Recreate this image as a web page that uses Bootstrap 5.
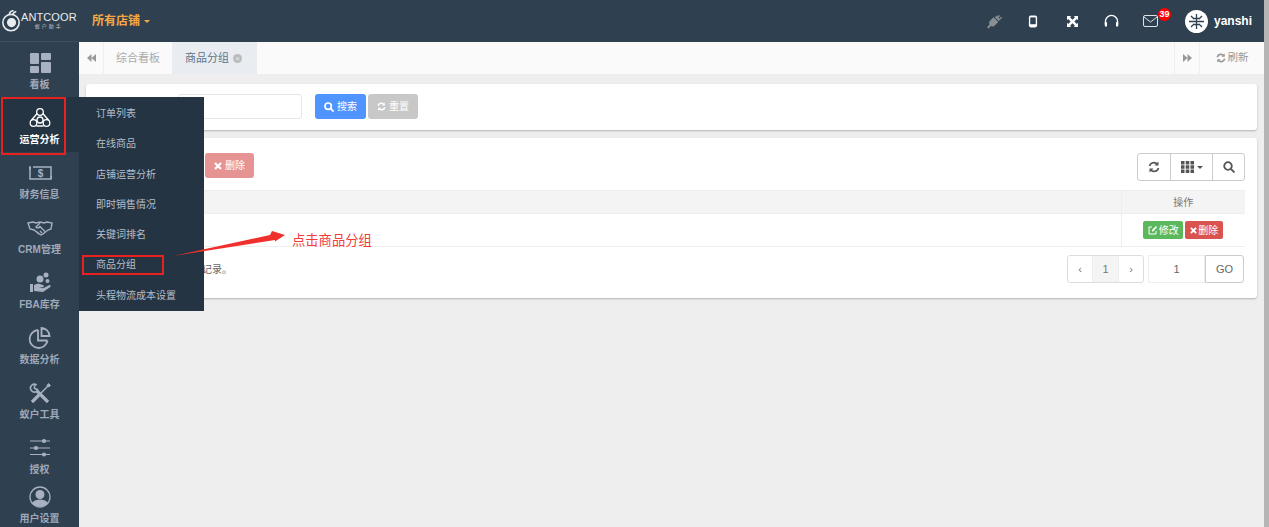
<!DOCTYPE html>
<html lang="zh-CN">
<head>
    <meta charset="UTF-8">
    <title>商品分组</title>
    <link href="https://cdn.jsdelivr.net/npm/bootstrap@5.3.0/dist/css/bootstrap.min.css" rel="stylesheet">
    <style>
        html, body { height: 100%; overflow: hidden; }
        body { font-family: "Liberation Sans", "Noto Sans CJK SC", sans-serif; font-size: 10px; color: #666; background: #eee; position: relative; }

        /* top bar */
        .top-bar { height: 42px; background: #2f4050; margin-right: 5px; }
        .logo-box { width: 79px; color: #e8ecef; padding-left: 1px; }
        .logo-name { font-size: 11px; line-height: 11px; letter-spacing: .1px; }
        .logo-sub { font-size: 5px; line-height: 7px; letter-spacing: 2px; text-align: center; color: #c5ccd2; }
        .shop-pick { color: #f4a742; font-size: 12px; font-weight: 700; margin-left: 13px; }
        .caret-down { display: inline-block; border-top: 3px solid currentColor; border-left: 3px solid transparent; border-right: 3px solid transparent; vertical-align: middle; }
        .top-icons { color: #fff; }
        .top-icon { width: 39px; display: flex; justify-content: center; position: relative; }
        .msg-count { position: absolute; top: -7px; left: 27px; background: #f00; color: #fff; font-size: 9px; font-weight: 700; line-height: 13px; width: 13px; height: 13px; text-align: center; border-radius: 50%; }
        .user-name { color: #fff; font-size: 12px; font-weight: 700; margin: 0 12px 0 6px; }
        .user-pic { width: 23px; height: 23px; border-radius: 50%; background: #fff; margin-left: 15px; }

        /* side menu */
        .main-wrap { height: 485px; }
        .side-bar { width: 79px; flex: none; background: #2f4050; border-top: 1px solid #3d4e5e; margin-top: -1px; }
        .side-item { height: 55px; color: #9ea9ba; display: flex; flex-direction: column; align-items: center; padding-top: 9px; font-weight: 700; font-size: 10px; line-height: 14px; text-decoration: none; }
        .side-item svg { height: 24px; width: 26px; margin-bottom: 3px; }
        .side-item.current { background: #243443; color: #fff; }
        .side-item.last-one { padding-top: 3px; }

        /* fly-out menu */
        .fly-menu { position: absolute; left: 79px; top: 97px; width: 125px; height: 214px; background: #243443; padding-top: 2px; z-index: 5; }
        .fly-menu a { display: block; height: 30.3px; line-height: 30px; padding-left: 17px; color: #b6bec8; font-size: 10px; text-decoration: none; }

        /* tabs */
        .page-area { min-width: 0; margin-right: 5px; }
        .tab-bar { height: 33px; background: #fafafa; border-bottom: 1px solid #eee; font-size: 11px; color: #aaa; }
        .tab-arrow { width: 25px; flex: none; color: #999; border-right: 1px solid #eee; justify-content: center; }
        .tab-link { padding: 0 12px; height: 100%; display: flex; align-items: center; gap: 4px; }
        .tab-link.now { background: #e9edf2; color: #5f7488; padding: 0 15px 0 13px; }
        .tab-close { width: 9px; height: 9px; border-radius: 50%; background: #bbb; color: #e9edf2; font-size: 8px; line-height: 9px; text-align: center; }
        .tab-end { border-left: 1px solid #eee; height: 100%; width: 25px; }
        .tab-refresh { width: 65px; justify-content: center; gap: 2px; font-size: 10.5px; color: #999; border-left: 1px solid #eee; height: 100%; }

        /* panels */
        .sheet { background: #fff; margin: 0 7px 8px 7px; border-radius: 3px; box-shadow: 0 1px 2px rgba(0,0,0,.25); }
        .search-sheet { height: 46px; margin-top: 9px; padding: 10px 0 0 92px; }
        .txt-box { width: 124px; height: 25px; border: 1px solid #e5e6e7; border-radius: 3px; margin-right: 13px; background: #fff; }
        .act-btn { height: 25px; width: 51px; border: 0; border-radius: 3px; color: #fff; font-size: 10px; padding: 0; display: inline-flex; align-items: center; justify-content: center; gap: 3px; }
        .act-blue { background: #4f94ff; margin-right: 2px; }
        .act-grey { background: #c8c8c8; width: 50px; }
        .act-red { background: #e69393; width: 49px; }
        .list-sheet { height: 160px; padding: 15px 12px 0 0; }
        .tool-row { height: 37px; padding-left: 119px; }
        .tool-group { display: flex; height: 28px; border: 1px solid #ccc; border-radius: 3px; color: #555; }
        .tool-group span { display: flex; align-items: center; justify-content: center; gap: 3px; border-left: 1px solid #ccc; }
        .tool-group span:first-child { border-left: 0; }
        .data-grid { margin: 0; }
        .data-grid th, .data-grid td { padding: 0; border-color: #eee; font-weight: 400; text-align: center; color: #777; font-size: 10px; }
        .data-grid th { background: #f4f4f4; height: 23px; vertical-align: middle; border-top: 1px solid #eee; border-bottom: 1px solid #eee; }
        .data-grid td { height: 33px; vertical-align: middle; background: #fff; border-bottom: 1px solid #eee; }
        .col-ops { width: 124px; border-left: 1px solid #eee; }
        .row-btn { display: inline-flex; align-items: center; justify-content: center; gap: 1px; height: 18px; border-radius: 2px; color: #fff; font-size: 10px; width: 40px; vertical-align: middle; }
        .row-edit { background: #5cb85c; margin-right: 2px; }
        .row-del { background: #d9534f; width: 38px; }
        .foot-row { height: 28px; margin-top: 8px; padding-left: 75px; }
        .foot-note { font-size: 10px; color: #666; }
        .page-box { display: flex; height: 28px; border: 1px solid #ddd; border-radius: 3px; color: #777; font-size: 11px; margin-right: 4px; }
        .page-box span { display: flex; align-items: center; justify-content: center; }
        .page-box .on { background: #f4f4f4; border-left: 1px solid #eee; border-right: 1px solid #eee; width: 27px; }
        .page-side { width: 24px; }
        .go-box { display: flex; height: 28px; width: 96px; color: #666; font-size: 11px; margin-right: 1px; }
        .go-num { width: 57px; border: 1px solid #eee; display: flex; align-items: center; justify-content: center; }
        .go-btn { flex: 1; border: 1px solid #ccc; border-radius: 0 3px 3px 0; display: flex; align-items: center; justify-content: center; }

        /* annotations drawn on the screenshot */
        .mark-box { position: absolute; border: 2px solid #e8231f; z-index: 6; }
        .mark-side { left: 1px; top: 97px; width: 65px; height: 58px; }
        .mark-item { left: 82px; top: 255px; width: 82px; height: 20px; }
        .mark-arrow { position: absolute; left: 165px; top: 225px; z-index: 6; }
        .mark-text { position: absolute; left: 292px; top: 232px; color: #f23c38; font-size: 13.3px; line-height: 17px; z-index: 6; }
        .edge-strip { position: absolute; right: 0; top: 0; width: 5px; height: 100%; background: #b5b5b5; z-index: 7; }
    </style>
</head>
<body>
    <!-- Top bar -->
    <div class="top-bar d-flex align-items-center">
        <div class="logo-box d-flex align-items-center">
            <svg width="20" height="22" viewBox="0 0 19 21" fill="none" stroke="#e8ecef" stroke-width="1.500"><circle cx="9.500" cy="12" r="7.800"/><circle cx="10" cy="12" r="3.600" fill="#e8ecef"/><path d="M8 4c0-2 1.500-3 4-3.500M11 4.500c.5-1.500 1.500-2.500 3.500-3"/></svg>
            <div>
                <div class="logo-name">ANTCOOR</div>
                <div class="logo-sub">蚁户助手</div>
            </div>
        </div>
        <div class="shop-pick">所有店铺<span class="caret-down ms-1"></span></div>
        <div class="top-icons d-flex align-items-center ms-auto">
            <span class="top-icon"><svg width="15" height="15" viewBox="0 0 16 16" fill="#8a8f94"><path d="M11 1l-2.500 2.500 4 4L15 5l1-1-1-1-2 2-1-1 2-2-1-1-2 2zM7 3.500L3.500 7c-1.500 1.500-1.500 3-.8 4.300L0 14l1.500 1.500 2.700-2.700c1.300.7 2.800.7 4.300-.8L12 8.500z"/></svg></span>
            <span class="top-icon"><svg width="10" height="13" viewBox="0 0 11 14"><rect x="1" y=".5" width="9" height="13" rx="2" fill="#fff"/><rect x="2.500" y="2.500" width="6" height="7.500" fill="#2f4050"/></svg></span>
            <span class="top-icon"><svg width="11" height="11" viewBox="0 0 13 13" fill="#fff"><path d="M0 0h5L3.600 1.400 6.500 4.300 9.400 1.400 8 0h5v5l-1.400-1.400-2.900 2.900 2.900 2.900L13 8v5H8l1.400-1.400-2.900-2.900-2.900 2.900L5 13H0V8l1.400 1.400 2.900-2.900-2.900-2.900L0 5z"/></svg></span>
            <span class="top-icon"><svg width="15" height="14" viewBox="0 0 16 15" fill="none" stroke="#fff" stroke-width="1.400"><path d="M1.500 11V8a6.500 6.500 0 0 1 13 0v3"/><rect x=".8" y="8.500" width="2.400" height="5" rx="1" fill="#fff" stroke="none"/><rect x="12.800" y="8.500" width="2.400" height="5" rx="1" fill="#fff" stroke="none"/></svg></span>
            <span class="top-icon"><svg width="15" height="12" viewBox="0 0 15 12" fill="none" stroke="#dfe3e6" stroke-width="1"><rect x=".5" y=".5" width="14" height="11" rx="1.500"/><path d="M1 2l6.500 5L14 2"/></svg><span class="msg-count">39</span></span>
            <span class="user-pic d-flex align-items-center justify-content-center"><svg width="17" height="17" viewBox="0 0 17 17" stroke="#2f4050" stroke-width="1.300" fill="none"><path d="M8.500 1v15M3 3l3 3M14 3l-3 3M1 8.500h15M3 14l3-3M14 14l-3-3M5 5.500h7M5 11.500h7"/></svg></span>
            <span class="user-name">yanshi</span>
        </div>
    </div>

    <div class="main-wrap d-flex">
        <!-- Side menu -->
        <div class="side-bar">
            <a class="side-item"><svg viewBox="0 0 26 24" fill="#a7b1c2"><rect x="3" y="2" width="9" height="11" rx="1"/><rect x="14" y="2" width="10" height="7" rx="1"/><rect x="3" y="15" width="9" height="7" rx="1"/><rect x="14" y="11" width="10" height="11" rx="1"/></svg>看板</a>
            <a class="side-item current"><svg viewBox="0 0 26 24" fill="none" stroke="#fff" stroke-width="1.300"><circle cx="13" cy="6" r="3.300"/><circle cx="6.500" cy="17" r="3.300"/><circle cx="19.500" cy="17" r="3.300"/><circle cx="13" cy="14" r="3"/><path d="M10.200 7.500L4.500 14M15.800 7.500l5.700 6.500M9.500 20h7"/></svg>运营分析</a>
            <a class="side-item"><svg viewBox="0 0 26 24" fill="none" stroke="#a7b1c2" stroke-width="1.500"><path d="M6 6h18v12H3V6h1"/><path d="M3 6v3M24 15v3"/><text x="13.500" y="16" font-size="10" font-weight="700" text-anchor="middle" fill="#a7b1c2" stroke="none" font-family="Liberation Sans">$</text></svg>财务信息</a>
            <a class="side-item"><svg viewBox="0 0 26 24" fill="none" stroke="#a7b1c2" stroke-width="1.400"><path d="M1 7l5-1 3 1 4-1 4 1 3-1 5 1-1 6-3 1-5 4-2 1-3-2-4-3-4-1z"/><path d="M13 7l-4 4c1 1.500 3 1 4-.5l5 5M12 18l-2-2M15 17l-2-2"/></svg>CRM管理</a>
            <a class="side-item"><svg viewBox="0 0 26 24" fill="#a7b1c2"><circle cx="13" cy="8" r="3.500"/><circle cx="19" cy="4" r="2.500"/><circle cx="20.500" cy="10" r="2"/><path d="M3 13h3v8H3zM7 14l4-1.500 5 1.500c1.500.5 1 2.500-.5 2.300L12 16l4 1.200 6-3c1.500-.5 2.500 1 1 2l-7 4.800-9-1z"/></svg>FBA库存</a>
            <a class="side-item"><svg viewBox="0 0 26 24" fill="none" stroke="#a7b1c2" stroke-width="1.800"><path d="M11 4a9 9 0 1 0 9.500 10.500M11 4v10.500h9.500"/><path d="M14.500 2a8.500 8.500 0 0 1 8 8h-8z"/></svg>数据分析</a>
            <a class="side-item"><svg viewBox="0 0 26 24" fill="none" stroke="#a7b1c2"><path d="M21 5L12 14" stroke-width="1.500"/><path d="M12 14L5 21" stroke-width="3.200"/><path d="M21.500 2.500l2 2-2 1.500-1.500-1.500z" fill="#a7b1c2"/><path d="M10 10l11 11" stroke-width="3.200"/><path d="M9 3.500a4 4 0 0 0-5.500 4.500 4 4 0 0 0 6 2.500l1-2-3-1 0-2.500z" stroke-width="1.500"/></svg>蚁户工具</a>
            <a class="side-item"><svg viewBox="0 0 26 24" fill="#a7b1c2" stroke="#a7b1c2" stroke-width="1.200"><path d="M3 5h20M3 12h20M3 18.500h20" fill="none"/><circle cx="17" cy="5" r="1.500"/><circle cx="9" cy="12" r="1.500"/><circle cx="17" cy="18.500" r="1.500"/></svg>授权</a>
            <a class="side-item last-one"><svg viewBox="0 0 26 24" fill="#a7b1c2"><circle cx="13" cy="12" r="10" fill="none" stroke="#a7b1c2" stroke-width="1.300"/><circle cx="13" cy="9.500" r="4.500"/><path d="M5 18c2-3 5-3.500 8-3.500s6 .5 8 3.500c-2 2.500-5 3.500-8 3.500s-6-1-8-3.500z"/></svg>用户设置</a>
        </div>

        <div class="page-area flex-grow-1">
            <!-- Tabs -->
            <div class="tab-bar d-flex align-items-center">
                <span class="tab-arrow d-flex align-items-center h-100"><svg width="9" height="8" viewBox="0 0 9 8" fill="#999"><path d="M4.500 0v8L0 4zM9 0v8L4.500 4z"/></svg></span>
                <span class="tab-link">综合看板</span>
                <span class="tab-link now">商品分组 <span class="tab-close">×</span></span>
                <span class="tab-end ms-auto d-flex align-items-center justify-content-center"><svg width="9" height="8" viewBox="0 0 9 8" fill="#999"><path d="M0 0v8l4.500-4zM4.500 0v8L9 4z"/></svg></span>
                <span class="tab-refresh d-flex align-items-center"><svg width="10" height="10" viewBox="0 0 12 12" fill="none" stroke="#999" stroke-width="2"><path d="M1.500 5a4.500 4.500 0 0 1 8-1.500M10.500 7a4.500 4.500 0 0 1-8 1.500"/><path d="M10.500 .5v4h-4zM1.500 11.500v-4h4z" fill="#999" stroke="none"/></svg>刷新</span>
            </div>

            <!-- Search form -->
            <div class="sheet search-sheet d-flex">
                <div class="txt-box"></div>
                <button class="act-btn act-blue"><svg width="10" height="10" viewBox="0 0 12 12" fill="none" stroke="#fff" stroke-width="2"><circle cx="5" cy="5" r="3.800"/><path d="M8 8l3.500 3.500"/></svg>搜索</button>
                <button class="act-btn act-grey"><svg width="9" height="9" viewBox="0 0 12 12" fill="none" stroke="#fff" stroke-width="2"><path d="M1.500 5a4.500 4.500 0 0 1 8-1.500M10.500 7a4.500 4.500 0 0 1-8 1.500"/><path d="M10.500 .5v4h-4zM1.500 11.500v-4h4z" fill="#fff" stroke="none"/></svg>重置</button>
            </div>

            <!-- Group list -->
            <div class="sheet list-sheet">
                <div class="tool-row d-flex">
                    <button class="act-btn act-red"><svg width="8" height="8" viewBox="0 0 8 8" stroke="#fff" stroke-width="2.200"><path d="M1 1l6 6M7 1L1 7"/></svg>删除</button>
                    <div class="tool-group ms-auto">
                        <span style="width:32px"><svg width="12" height="12" viewBox="0 0 12 12" fill="none" stroke="#555" stroke-width="1.600"><path d="M1.500 5a4.500 4.500 0 0 1 8-1.500M10.500 7a4.500 4.500 0 0 1-8 1.500"/><path d="M10.500 .5v4h-4zM1.500 11.500v-4h4z" fill="#555" stroke="none"/></svg></span>
                        <span style="width:42px"><svg width="13" height="12" viewBox="0 0 13 12" fill="#555"><path d="M0 0h3.500v3.500H0zM4.700 0h3.600v3.500H4.700zM9.500 0H13v3.500H9.500zM0 4.300h3.500v3.500H0zM4.700 4.300h3.600v3.500H4.700zM9.500 4.300H13v3.500H9.500zM0 8.500h3.500V12H0zM4.700 8.500h3.600V12H4.700zM9.500 8.500H13V12H9.500z"/></svg><i class="caret-down"></i></span>
                        <span style="width:32px"><svg width="12" height="12" viewBox="0 0 12 12" fill="none" stroke="#555" stroke-width="1.800"><circle cx="5" cy="5" r="3.800"/><path d="M8 8l3.500 3.500"/></svg></span>
                    </div>
                </div>
                <table class="table data-grid">
                    <thead><tr><th></th><th class="col-ops">操作</th></tr></thead>
                    <tbody>
                        <tr><td></td><td class="col-ops"><span class="row-btn row-edit"><svg width="10" height="10" viewBox="0 0 10 10" fill="none" stroke="#fff" stroke-width="1"><path d="M8 6v3H1V2h3"/><path d="M4 6.500V5l4-4 1 1.300-4 4.200z" fill="#fff" stroke="none"/></svg>修改</span><span class="row-btn row-del"><svg width="7" height="7" viewBox="0 0 8 8" stroke="#fff" stroke-width="2.200"><path d="M1 1l6 6M7 1L1 7"/></svg>删除</span></td></tr>
                    </tbody>
                </table>
                <div class="foot-row d-flex align-items-center">
                    <span class="foot-note">总共 1 条记录。</span>
                    <div class="page-box ms-auto"><span class="page-side">‹</span><span class="on">1</span><span class="page-side">›</span></div>
                    <div class="go-box"><span class="go-num">1</span><span class="go-btn">GO</span></div>
                </div>
            </div>
        </div>
    </div>

    <!-- Fly-out menu of 运营分析 -->
    <div class="fly-menu">
        <a href="#">订单列表</a>
        <a href="#">在线商品</a>
        <a href="#">店铺运营分析</a>
        <a href="#">即时销售情况</a>
        <a href="#">关键词排名</a>
        <a href="#">商品分组</a>
        <a href="#">头程物流成本设置</a>
    </div>

    <!-- Annotations -->
    <div class="mark-box mark-side"></div>
    <div class="mark-box mark-item"></div>
    <svg class="mark-arrow" width="125" height="35" viewBox="0 0 125 35"><path d="M8 31L105 10 107 6 120 10 110 16.500 110 15z" fill="#f0302c"/></svg>
    <div class="mark-text">点击商品分组</div>
    <div class="edge-strip"></div>
</body>
</html>
